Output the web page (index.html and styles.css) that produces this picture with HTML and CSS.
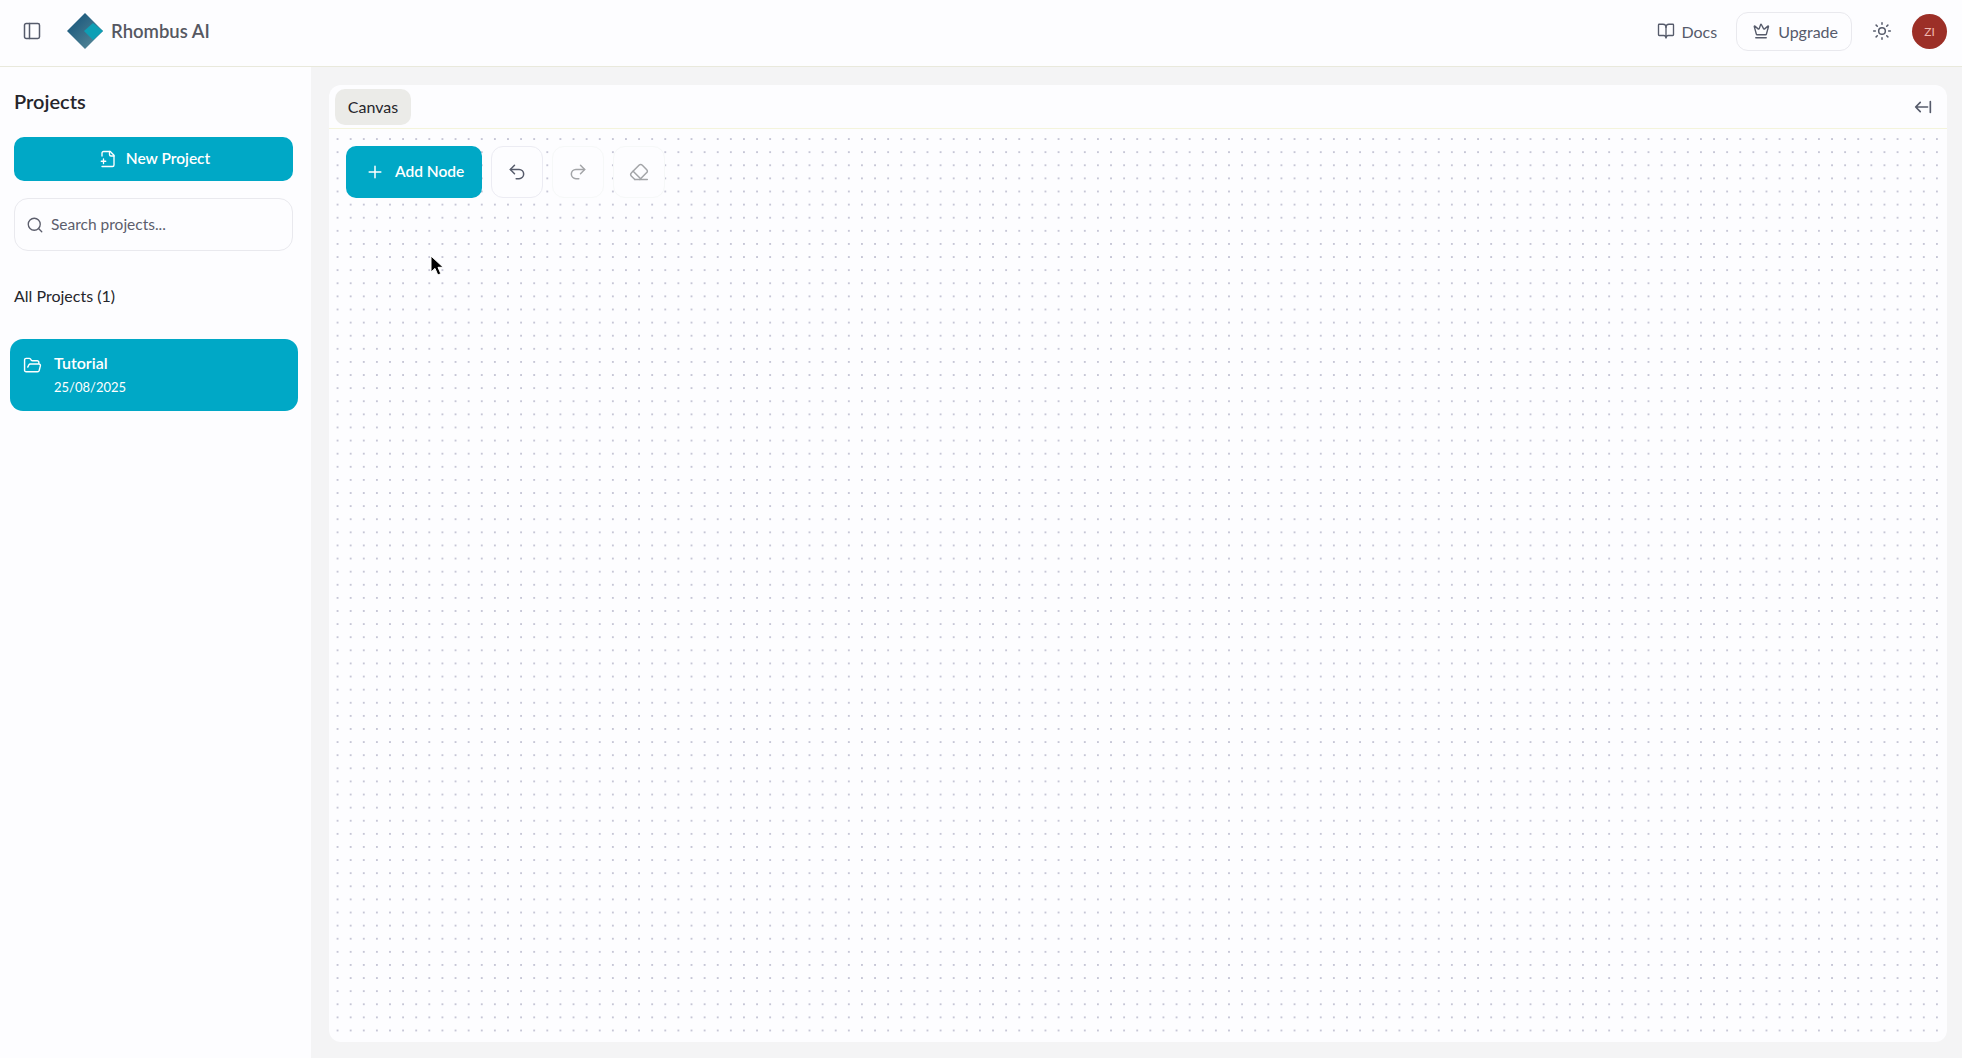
FILE: index.html
```html
<!DOCTYPE html>
<html lang="en">
<head>
    <meta charset="UTF-8">
    <meta name="viewport" content="width=device-width, initial-scale=1.0">
    <title>Rhombus AI</title>
    <link rel="stylesheet" href="styles.css">
</head>
<body>

    <header class="topbar">
        <div class="topbar-left">
            <button class="icon-btn toggle">
                <svg class="icon" viewBox="0 0 24 24"><rect x="3" y="3" width="18" height="18" rx="2"/><path d="M9 3v18"/></svg>
            </button>
            <svg class="logo" viewBox="0 0 36 36">
                <defs>
                    <linearGradient id="logoGrad" x1="0" y1="0" x2="1" y2="1">
                        <stop offset="0" stop-color="#0f4f78"/>
                        <stop offset="1" stop-color="#5f8f9c"/>
                    </linearGradient>
                </defs>
                <path d="M18 0 36 18 18 36 0 18z" fill="url(#logoGrad)"/>
                <path d="M26 10 36 18 26 27 17 18z" fill="#0d9fb5"/>
            </svg>
            <span class="brand">Rhombus AI</span>
        </div>
        <div class="topbar-right">
            <a class="nav-link docs">
                <svg class="icon" viewBox="0 0 24 24"><path d="M12 7v14"/><path d="M3 18a1 1 0 0 1-1-1V4a1 1 0 0 1 1-1h5a4 4 0 0 1 4 4 4 4 0 0 1 4-4h5a1 1 0 0 1 1 1v13a1 1 0 0 1-1 1h-6a3 3 0 0 0-3 3 3 3 0 0 0-3-3z"/></svg>
                Docs
            </a>
            <a class="nav-link upgrade">
                <svg class="icon" viewBox="0 0 24 24"><path d="M11.56 3.27a.5.5 0 0 1 .88 0l2.95 5.61a1 1 0 0 0 1.52.29l4.28-3.66a.5.5 0 0 1 .8.52l-2.83 10.25a1 1 0 0 1-.96.72H6.8a1 1 0 0 1-.96-.72L3.01 6.03a.5.5 0 0 1 .8-.52l4.28 3.66a1 1 0 0 0 1.52-.29z"/><path d="M5 21h14"/></svg>
                Upgrade
            </a>
            <button class="icon-btn theme">
                <svg class="icon" viewBox="0 0 24 24"><circle cx="12" cy="12" r="4"/><path d="M12 2v2M12 20v2M4.93 4.93l1.41 1.41M17.66 17.66l1.41 1.41M2 12h2M20 12h2M6.34 17.66l-1.41 1.41M19.07 4.93l-1.41 1.41"/></svg>
            </button>
            <div class="avatar">ZI</div>
        </div>
    </header>

    <div class="layout">
        <aside class="sidebar">
            <h2>Projects</h2>
            <button class="new-project">
                <svg class="icon" viewBox="0 0 24 24"><path d="M4 22h14a2 2 0 0 0 2-2V7l-5-5H6a2 2 0 0 0-2 2v4"/><path d="M14 2v4a2 2 0 0 0 2 2h4"/><path d="M3 15h6M6 12v6"/></svg>
                <span class="label">New Project</span>
            </button>
            <div class="search">
                <svg class="icon" viewBox="0 0 24 24"><circle cx="11" cy="11" r="8"/><path d="m21 21-4.3-4.3"/></svg>
                <span class="label">Search projects...</span>
            </div>
            <div class="all-projects">All Projects (1)</div>
            <div class="project-card">
                <svg class="icon" viewBox="0 0 24 24"><path d="m6 14 1.5-2.9A2 2 0 0 1 9.24 10H20a2 2 0 0 1 1.94 2.5l-1.54 6a2 2 0 0 1-1.95 1.5H4a2 2 0 0 1-2-2V5a2 2 0 0 1 2-2h3.9a2 2 0 0 1 1.69.9l.81 1.2a2 2 0 0 0 1.67.9H18a2 2 0 0 1 2 2v2"/></svg>
                <div class="project-info">
                    <div class="project-name">Tutorial</div>
                    <div class="project-date">25/08/2025</div>
                </div>
            </div>
        </aside>

        <main class="main">
            <section class="panel">
                <div class="tabs">
                    <div class="tab"><span class="label">Canvas</span></div>
                    <svg class="icon collapse" viewBox="0 0 24 24"><path d="M4 12h13M9 7l-5 5 5 5M20 6v12"/></svg>
                </div>
                <div class="canvas">
                    <div class="toolbar">
                        <button class="add-node">
                            <svg class="icon" viewBox="0 0 24 24"><path d="M5 12h14M12 5v14"/></svg>
                            <span class="label">Add Node</span>
                        </button>
                        <button class="tool">
                            <svg class="icon" viewBox="0 0 24 24"><path d="M9 14 4 9l5-5"/><path d="M4 9h10.5a5.5 5.5 0 0 1 0 11H11"/></svg>
                        </button>
                        <button class="tool off">
                            <svg class="icon" viewBox="0 0 24 24"><path d="m15 14 5-5-5-5"/><path d="M20 9H9.5a5.5 5.5 0 0 0 0 11H13"/></svg>
                        </button>
                        <button class="tool off">
                            <svg class="icon" viewBox="0 0 24 24"><path d="m7 21-4.3-4.3c-1-1-1-2.5 0-3.4l9.6-9.6c1-1 2.5-1 3.4 0l5.6 5.6c1 1 1 2.5 0 3.4L13 21"/><path d="M22 21H7"/><path d="m5 11 9 9"/></svg>
                        </button>
                    </div>
                    <svg class="cursor" viewBox="0 0 14 22"><path d="M1 1v16l4-3.6 2.8 6.6 3-1.3-2.8-6.4h5.2z" fill="#000" stroke="#fff" stroke-width="1"/></svg>
                </div>
            </section>
        </main>
    </div>

</body>
</html>
```

FILE: styles.css
```css
* {
    box-sizing: border-box;
}
body {
    font-family: 'Lato', sans-serif;
    background-color: #f4f4f5;
    color: #25252b;
    margin: 0;
    height: 1058px;
    overflow: hidden;
}
button {
    font-family: inherit;
    border: none;
    background: none;
    padding: 0;
}
.icon {
    width: 20px;
    height: 20px;
    fill: none;
    stroke: currentColor;
    stroke-width: 1.8;
    stroke-linecap: round;
    stroke-linejoin: round;
    flex: none;
}
.label {
    margin-bottom: 2px;
}

/* top bar */
.topbar {
    height: 67px;
    background-color: #fdfdff;
    border-bottom: 1px solid #e9e9dc;
    display: flex;
    justify-content: space-between;
    align-items: center;
    padding: 0 15px 4px 22px;
}
.topbar-left, .topbar-right {
    display: flex;
    align-items: center;
}
.icon-btn {
    display: flex;
    color: #565b6b;
}
.logo {
    width: 36px;
    height: 36px;
    margin-left: 25px;
}
.brand {
    font-size: 18.5px;
    font-weight: 600;
    color: #565862;
    margin-left: 8px;
}
.nav-link {
    display: flex;
    align-items: center;
    gap: 8px;
    font-size: 16px;
    color: #565b6b;
}
.nav-link .icon {
    width: 18px;
    height: 18px;
}
.docs {
    gap: 6px;
}
.upgrade {
    height: 39px;
    padding: 0 13px 0 15px;
    border: 1px solid #e9e9ee;
    border-radius: 12px;
    margin-left: 19px;
}
.theme {
    margin-left: 20px;
}
.avatar {
    width: 35px;
    height: 35px;
    border-radius: 50%;
    background-color: #9c2f27;
    color: #f0b8b0;
    font-size: 12px;
    display: flex;
    align-items: center;
    justify-content: center;
    margin-left: 20px;
}

/* sidebar */
.layout {
    display: flex;
    height: 991px;
}
.sidebar {
    width: 311px;
    background-color: #fdfdff;
    padding: 0 10px;
}
.sidebar h2 {
    font-size: 20px;
    font-weight: 600;
    line-height: 26px;
    margin: 21px 0 0 4px;
}
.new-project {
    width: 279px;
    height: 44px;
    margin: 23px 0 0 4px;
    background-color: #00a8c6;
    color: #fff;
    border-radius: 10px;
    font-size: 15.5px;
    font-weight: 600;
    display: flex;
    align-items: center;
    justify-content: center;
    gap: 9px;
}
.new-project .icon {
    width: 18px;
    height: 18px;
    margin-left: 2px;
}
.search {
    width: 279px;
    height: 53px;
    margin: 17px 0 0 4px;
    border: 1px solid #e9e9ee;
    border-radius: 14px;
    display: flex;
    align-items: center;
    gap: 7px;
    padding-left: 11px;
    font-size: 15.5px;
    color: #5c5e6c;
}
.search .icon {
    width: 18px;
    height: 18px;
}
.all-projects {
    font-size: 16px;
    line-height: 20px;
    margin: 35px 0 0 4px;
}
.project-card {
    width: 288px;
    height: 72px;
    margin-top: 33px;
    background-color: #00a8c6;
    color: #fff;
    border-radius: 13px;
    display: flex;
    align-items: flex-start;
    padding: 12px 0 0 13px;
}
.project-card .icon {
    width: 19px;
    height: 19px;
    margin-top: 5px;
}
.project-info {
    margin-left: 12px;
}
.project-name {
    font-size: 16px;
    line-height: 24px;
    font-weight: 600;
}
.project-date {
    font-size: 13px;
    line-height: 24px;
}

/* canvas panel */
.main {
    flex: 1;
    padding: 18px 15px 16px 18px;
}
.panel {
    height: 100%;
    background-color: #fdfdff;
    border-radius: 12px;
    display: flex;
    flex-direction: column;
}
.tabs {
    height: 44px;
    flex: none;
    border-bottom: 1px solid #f4f4dc;
    display: flex;
    justify-content: space-between;
    align-items: flex-start;
    padding: 4px 13px 0 6px;
}
.tab {
    width: 76px;
    height: 36px;
    background-color: #ebebe8;
    border-radius: 10px;
    font-size: 16px;
    display: flex;
    align-items: center;
    justify-content: center;
}
.collapse {
    color: #565b6b;
    width: 22px;
    height: 22px;
    margin-top: 7px;
}
.canvas {
    flex: 1;
    position: relative;
    padding: 17px 17px;
    border-radius: 0 0 12px 12px;
    background-image: radial-gradient(circle, #c6c6d6 0.8px, transparent 1px);
    background-size: 13.12px 13.12px;
    background-position: 2px 3.5px;
}
.toolbar {
    display: flex;
    align-items: center;
    gap: 9px;
}
.add-node {
    width: 136px;
    height: 52px;
    background-color: #00a8c6;
    color: #fff;
    border-radius: 10px;
    font-size: 15.5px;
    font-weight: 600;
    display: flex;
    align-items: center;
    gap: 10px;
    padding-left: 19px;
}
.tool {
    width: 52px;
    height: 52px;
    background-color: #fdfdff;
    border: 1px solid #ececf3;
    border-radius: 12px;
    color: #565b6b;
    display: flex;
    align-items: center;
    justify-content: center;
}
.tool.off {
    color: #a3a5a8;
    border-color: #f6f8f8;
}
.cursor {
    position: absolute;
    left: 101px;
    top: 126px;
    width: 14px;
    height: 22px;
}
```
